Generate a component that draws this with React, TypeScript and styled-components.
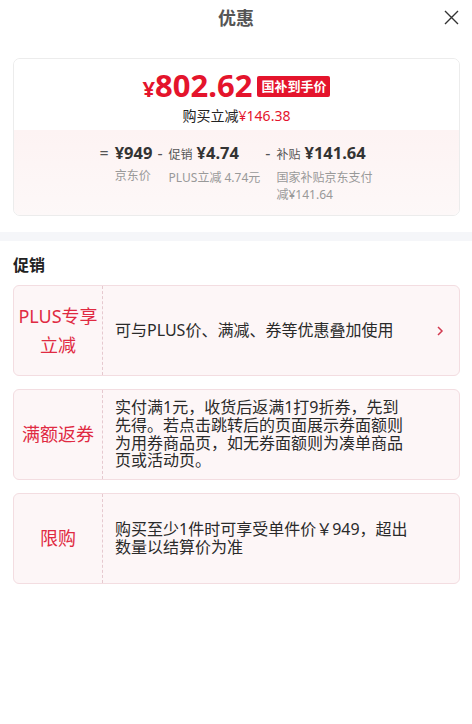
import * as React from 'react';
import styled, { createGlobalStyle } from 'styled-components';

const GlobalStyle = createGlobalStyle`
    body {
        margin: 0;
        background: #ffffff;
        font-family: "Noto Sans", "Noto Sans CJK SC", sans-serif;
        color: #333;
    }
`;

const red = '#e4142c';

const StyledPage = styled.div`
    width: 472px;
    min-height: 724px;
    background: #fff;
`;

const StyledHeader = styled.div`
    position: relative;
    height: 34px;
    display: flex;
    align-items: center;
    justify-content: center;
    font-size: 18px;
    font-weight: bold;
    color: #555;

    > button {
        position: absolute;
        right: 11px;
        top: 7px;
        width: 20px;
        height: 20px;
        padding: 0;
        border: none;
        background: none;
        display: flex;
        align-items: center;
        justify-content: center;
    }
`;

const StyledPriceCard = styled.div`
    margin: 24px 12px 0 13px;
    border: 1px solid #ececec;
    border-radius: 7px;
    overflow: hidden;
`;

const StyledPriceTop = styled.div`
    padding: 11px 0 4px;
    display: flex;
    flex-direction: column;
    align-items: center;
    background: #fff;
`;

const StyledPriceLine = styled.div`
    display: flex;
    align-items: baseline;
    color: ${red};
    font-weight: bold;
    height: 30px;

    .yen {
        font-size: 22px;
        line-height: 22px;
    }

    .num {
        font-size: 31px;
        line-height: 30px;
    }
`;

const StyledBadge = styled.span`
    align-self: center;
    margin-left: 5px;
    margin-top: 3px;
    padding: 0 4px;
    height: 21px;
    line-height: 21px;
    background: ${red};
    color: #fff;
    font-size: 13px;
    font-weight: bold;
    border-radius: 2px;
`;

const StyledSaving = styled.div`
    margin-top: 6px;
    font-size: 14px;
    line-height: 20px;
    color: #222;

    em {
        font-style: normal;
        color: ${red};
    }
`;

const StyledBreakdown = styled.div`
    padding: 11px 0 12px;
    display: flex;
    justify-content: center;
    gap: 5px;
    background: linear-gradient(#fdf3f3, #fdf8f8);
`;

const StyledColumn = styled.div<{ $maxWidth?: number }>`
    display: flex;
    align-items: flex-start;

    .op {
        font-size: 16px;
        color: #555;
        line-height: 24px;
        margin-right: 6px;
    }

    .body {
        max-width: ${(p) => (p.$maxWidth ? `${p.$maxWidth}px` : 'none')};
    }
`;

const StyledAmount = styled.div`
    white-space: nowrap;
    line-height: 24px;
    color: #333;

    .label {
        font-size: 12px;
        color: #555;
        margin-right: 4px;
    }

    b {
        font-size: 16.5px;
    }
`;

const StyledNote = styled.div`
    margin-top: 2px;
    font-size: 12px;
    line-height: 17px;
    color: #999;
`;

const StyledBand = styled.div`
    margin-top: 16px;
    height: 9px;
    background: #f5f6f9;
`;

const StyledSectionTitle = styled.div`
    padding: 14px 13px 10px;
    font-size: 16px;
    font-weight: bold;
    color: #222;
    line-height: 20px;
`;

const StyledPromoList = styled.div`
    padding: 0 12px 0 13px;
    display: flex;
    flex-direction: column;
    gap: 13px;
`;

const StyledPromo = styled.div`
    box-sizing: border-box;
    min-height: 91px;
    display: flex;
    background: #fdf6f7;
    border: 1px solid #f3dde1;
    border-radius: 6px;
`;

const StyledPromoTag = styled.div`
    flex: 0 0 89px;
    display: flex;
    align-items: center;
    justify-content: center;
    text-align: center;
    border-right: 1px dashed #e6c9cf;
    color: #e02a42;
    font-size: 18px;
    line-height: 29px;
    padding: 0 4px;
    box-sizing: border-box;
`;

const StyledPromoText = styled.div`
    flex: 1;
    display: flex;
    align-items: center;
    padding: 6px 0 6px 12px;

    p {
        margin: 0;
        width: 296px;
        font-size: 16px;
        line-height: 17.6px;
        color: #2a2a2a;
    }
`;

const StyledChevron = styled.div`
    width: 38px;
    display: flex;
    align-items: center;
    justify-content: center;
`;

const promos = [
    { tag: 'PLUS专享立减', text: '可与PLUS价、满减、券等优惠叠加使用', arrow: true },
    {
        tag: '满额返券',
        text: '实付满1元，收货后返满1打9折券，先到先得。若点击跳转后的页面展示券面额则为用券商品页，如无券面额则为凑单商品页或活动页。',
    },
    { tag: '限购', text: '购买至少1件时可享受单件价￥949，超出数量以结算价为准' },
];

export default function App() {
    return (
        <StyledPage>
            <GlobalStyle />
            <StyledHeader>
                优惠
                <button aria-label="close">
                    <svg width="15" height="15" viewBox="0 0 15 15">
                        <path d="M1 1L14 14M14 1L1 14" stroke="#333" strokeWidth="1.4" fill="none" />
                    </svg>
                </button>
            </StyledHeader>

            <StyledPriceCard>
                <StyledPriceTop>
                    <StyledPriceLine>
                        <span className="yen">¥</span>
                        <span className="num">802.62</span>
                        <StyledBadge>国补到手价</StyledBadge>
                    </StyledPriceLine>
                    <StyledSaving>
                        购买立减<em>¥146.38</em>
                    </StyledSaving>
                </StyledPriceTop>
                <StyledBreakdown>
                    <StyledColumn>
                        <span className="op">=</span>
                        <div className="body">
                            <StyledAmount>
                                <b>¥949</b>
                            </StyledAmount>
                            <StyledNote>京东价</StyledNote>
                        </div>
                    </StyledColumn>
                    <StyledColumn>
                        <span className="op">-</span>
                        <div className="body">
                            <StyledAmount>
                                <span className="label">促销</span>
                                <b>¥4.74</b>
                            </StyledAmount>
                            <StyledNote>PLUS立减 4.74元</StyledNote>
                        </div>
                    </StyledColumn>
                    <StyledColumn $maxWidth={97}>
                        <span className="op">-</span>
                        <div className="body">
                            <StyledAmount>
                                <span className="label">补贴</span>
                                <b>¥141.64</b>
                            </StyledAmount>
                            <StyledNote>国家补贴京东支付减¥141.64</StyledNote>
                        </div>
                    </StyledColumn>
                </StyledBreakdown>
            </StyledPriceCard>

            <StyledBand />
            <StyledSectionTitle>促销</StyledSectionTitle>

            <StyledPromoList>
                {promos.map((p) => (
                    <StyledPromo key={p.tag}>
                        <StyledPromoTag>{p.tag}</StyledPromoTag>
                        <StyledPromoText>
                            <p>{p.text}</p>
                        </StyledPromoText>
                        <StyledChevron>
                            {p.arrow && (
                                <svg width="8" height="12" viewBox="0 0 8 12">
                                    <path d="M2 2L6 6L2 10" stroke="#d23a50" strokeWidth="1.5" fill="none" />
                                </svg>
                            )}
                        </StyledChevron>
                    </StyledPromo>
                ))}
            </StyledPromoList>
        </StyledPage>
    );
}
